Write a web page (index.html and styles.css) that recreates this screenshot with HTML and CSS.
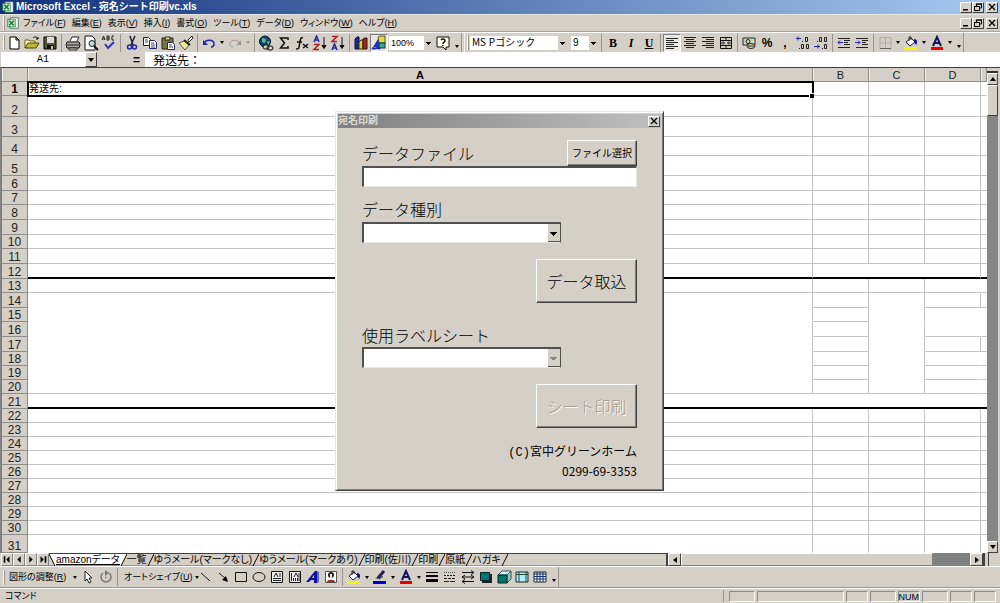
FILE: index.html
```html
<!DOCTYPE html>
<html lang="ja">
<head>
<meta charset="utf-8">
<title>Microsoft Excel - 宛名シート印刷vc.xls</title>
<link rel="stylesheet" href="styles.css">
</head>
<body>
<svg class="defs" aria-hidden="true">
  <symbol id="bucket" viewBox="0 0 16 16"><path d="M1 12h13v3H1z" fill="var(--ink)"/><path d="M3 7l5-4 4 4-5 4z" fill="#fff" stroke="#223" /><path d="M6 6V2h2v3" fill="none" stroke="#223"/><path d="M11 4c3 0 4 3 2 6l-2-3z" fill="#118"/></symbol>
  <symbol id="fontcolor" viewBox="0 0 16 16"><path d="M2 12h12v3H2z" fill="#e00"/><path d="M4 11L8 2l4 9M5.500 8h5" fill="none" stroke="#116" stroke-width="2"/></symbol>
  <symbol id="excel" viewBox="0 0 16 16"><path d="M4 1h11v14H4z" fill="#fff" stroke="#264"/><path d="M1 3h10v10H1z" fill="#d8ecd8" stroke="#173"/><path d="M3 5l6 6M9 5l-6 6" stroke="#173" stroke-width="2"/></symbol>
  <symbol id="min" viewBox="0 0 10 8"><path d="M2 6h5v1.500H2z"/></symbol>
  <symbol id="restore" viewBox="0 0 10 8"><path d="M3.500 3V1h5v4H7M1.500 3.500h5v4h-5z" fill="none" stroke="#000"/><path d="M3 .500h6v1H3zM1 3h6v1H1z"/></symbol>
  <symbol id="close" viewBox="0 0 10 8"><path d="M2 1l6 6M8 1L2 7" stroke="#000" stroke-width="1.300"/></symbol>
</svg>

<header class="title">
  <svg class="logo"><use href="#excel"/></svg>
  <h1>Microsoft Excel - 宛名シート印刷vc.xls</h1>
  <div class="winbtns">
    <button aria-label="最小化"><svg><use href="#min"/></svg></button><button aria-label="元に戻す"><svg><use href="#restore"/></svg></button><button class="x" aria-label="閉じる"><svg><use href="#close"/></svg></button>
  </div>
</header>

<nav class="menu">
  <i class="grip"></i>
  <svg class="logo"><use href="#excel"/></svg>
  <div class="items">
    <button>ファイル(<u>F</u>)</button><button>編集(<u>E</u>)</button><button>表示(<u>V</u>)</button><button>挿入(<u>I</u>)</button><button>書式(<u>O</u>)</button><button>ツール(<u>T</u>)</button><button>データ(<u>D</u>)</button><button>ウィンドウ(<u>W</u>)</button><button>ヘルプ(<u>H</u>)</button>
  </div>
  <div class="winbtns">
    <button aria-label="ブックを最小化"><svg><use href="#min"/></svg></button><button aria-label="ブックを元に戻す"><svg><use href="#restore"/></svg></button><button class="x" aria-label="ブックを閉じる"><svg><use href="#close"/></svg></button>
  </div>
</nav>

<div class="toolbar">
  <div class="bar">
    <i class="grip"></i>
    <button class="ic" aria-label="新規作成"><svg viewBox="0 0 16 16"><path d="M4 2h6l3 3v9H4zM10 2v3h3" fill="#fff" stroke="#000"/></svg></button>
    <button class="ic" aria-label="開く"><svg viewBox="0 0 16 16"><path d="M1 13V5h4l1 1h5v2" fill="#ffd" stroke="#660"/><path d="M1 13l3-5h11l-3 5z" fill="#bb3" stroke="#440"/><path d="M9 3c2-2 4-1 5 1m0-2v2h-2" fill="none" stroke="#000"/></svg></button>
    <button class="ic" aria-label="上書き保存"><svg viewBox="0 0 16 16"><path d="M2 2h12v12H2z" fill="#553" stroke="#000"/><path d="M5 2h7v6H5z" fill="#ddd"/><path d="M5 10h7v4H5z" fill="#111"/><path d="M9 11h2v3H9z" fill="#ccc"/></svg></button>
    <i class="sep"></i>
    <button class="ic" aria-label="印刷"><svg viewBox="0 0 16 16"><path d="M5 6l2-4h7l-2 4" fill="#fff" stroke="#222"/><path d="M2 7h12l1 3-1 3H2l-1-3z" fill="#aaa" stroke="#111"/><path d="M2 10h12M4 13h8v2H4z" stroke="#222" fill="#ddb"/></svg></button>
    <button class="ic" aria-label="印刷プレビュー"><svg viewBox="0 0 16 16"><path d="M2 1h7l3 3v11H2z" fill="#fff" stroke="#111"/><circle cx="9" cy="8.500" r="3" fill="#bdd" stroke="#222"/><path d="M11 11l4 4" stroke="#111" stroke-width="2"/></svg></button>
    <button class="ic" aria-label="スペルチェック"><svg viewBox="0 0 16 16"><path d="M1 5l1.500-4L4 5M2 4h2M6 1v4h2V1zM6 3h2M13 1h-2v4h2" fill="none" stroke="#222"/><path d="M4 9l3 4 6-6" fill="none" stroke="#33a" stroke-width="2"/></svg></button>
    <i class="sep"></i>
    <button class="ic" aria-label="切り取り"><svg viewBox="0 0 16 16"><path d="M6 1l3 9M11 1L7 10" stroke="#223" fill="none" stroke-width="1.500"/><circle cx="5.500" cy="12" r="2" fill="none" stroke="#22a" stroke-width="1.500"/><circle cx="10.500" cy="12" r="2" fill="none" stroke="#22a" stroke-width="1.500"/></svg></button>
    <button class="ic" aria-label="コピー"><svg viewBox="0 0 16 16"><path d="M1.500 2.500h5l2 2v6h-7z" fill="#fff" stroke="#222"/><path d="M7.500 5.500h5l2 2v6h-7z" fill="#fff" stroke="#226"/><path d="M3 5h3M3 7h3M9 8h3M9 10h4M9 12h4" stroke="#446"/></svg></button>
    <button class="ic" aria-label="貼り付け"><svg viewBox="0 0 16 16"><path d="M2 3h11v11H2z" fill="#774" stroke="#222"/><path d="M5 2h5v3H5z" fill="#dd8" stroke="#222"/><path d="M7.500 7.500h5l2 2v5h-7z" fill="#fff" stroke="#226"/><path d="M9 10h3M9 12h4" stroke="#446"/></svg></button>
    <button class="ic" aria-label="書式のコピー"><svg viewBox="0 0 16 16"><path d="M10 5l4-4 1 2-4 4z" fill="#fff" stroke="#222"/><path d="M1 8l5-2 5 4-4 5z" fill="#ee9" stroke="#553"/><path d="M6 5l6 5" stroke="#222" stroke-width="2"/></svg></button>
    <i class="sep"></i>
    <button class="ic" aria-label="元に戻す"><svg viewBox="0 0 16 16"><path d="M3 9c1-5 10-5 10 0 0 2-1 3-3 3" fill="none" stroke="#22a" stroke-width="1.500"/><path d="M2 5v5h5z" fill="#22a"/></svg></button>
    <button class="dd" aria-label="元に戻す履歴"></button>
    <button class="ic" aria-label="やり直し" disabled><svg viewBox="0 0 16 16"><path d="M13 9C12 4 3 4 3 9c0 2 1 3 3 3" fill="none" stroke="#999"/><path d="M14 5v5H9z" fill="#999"/></svg></button>
    <button class="dd off" aria-label="やり直し履歴" disabled></button>
    <i class="sep"></i>
    <button class="ic" aria-label="ハイパーリンク"><svg viewBox="0 0 16 16"><circle cx="7" cy="6.500" r="5.500" fill="#146" stroke="#013"/><path d="M4 3l4 1-1 4-3-1zM9 6l3 1-2 3z" fill="#6b9"/><rect x="5" y="10" width="6" height="4" rx="2" fill="#ccc" stroke="#111"/><rect x="9" y="11" width="6" height="4" rx="2" fill="none" stroke="#111"/></svg></button>
    <button class="ic" aria-label="オート SUM"><svg viewBox="0 0 16 16"><path d="M12 5V3H4.500l4 5-4 5H12v-2" fill="none" stroke="#111" stroke-width="1.500"/></svg></button>
    <button class="ic" aria-label="関数貼り付け"><svg viewBox="0 0 16 16"><path d="M9 3C6 1 6 8 5 12c0 2-1 2-3 2M3 7h5" fill="none" stroke="#111" stroke-width="1.500"/><path d="M9 9l5 4M14 9l-5 4" stroke="#111" stroke-width="1.500"/></svg></button>
    <button class="ic" aria-label="昇順"><svg viewBox="0 0 16 16"><path d="M2 7l2.500-6L7 7M3 5h3" fill="none" stroke="#22a" stroke-width="1.500"/><path d="M2 9.500h5l-5 5h5" fill="none" stroke="#a22" stroke-width="1.500"/><path d="M12 2v10M10 10.500l2 3 2-3z" stroke="#111"/></svg></button>
    <button class="ic" aria-label="降順"><svg viewBox="0 0 16 16"><path d="M2 1.500h5l-5 5h5" fill="none" stroke="#a22" stroke-width="1.500"/><path d="M2 15l2.500-6L7 15M3 13h3" fill="none" stroke="#22a" stroke-width="1.500"/><path d="M12 2v10M10 10.500l2 3 2-3z" stroke="#111"/></svg></button>
    <i class="sep"></i>
    <button class="ic" aria-label="グラフウィザード"><svg viewBox="0 0 16 16"><path d="M2 4l2-2h2v12H2z" fill="#22a" stroke="#113"/><path d="M6 7l2-2h2v9H6z" fill="#dc3" stroke="#331"/><path d="M10 4l2-1h2v11h-4z" fill="#a22" stroke="#311"/></svg></button>
    <button class="ic pressed" aria-label="図形描画"><svg viewBox="0 0 16 16"><path d="M7 2l2-1h5v7H8z" fill="#dd4" stroke="#553"/><path d="M2 12L7 4l2 8z" fill="#23b"/><rect x="8" y="8" width="6" height="5" fill="#3a9" stroke="#133"/><path d="M1 13c4 2 5-2 8 1" stroke="#22a" fill="none" stroke-width="2"/></svg></button>
    <select class="combo zoom" aria-label="ズーム"><option>100%</option></select>
    <button class="ic" aria-label="ヘルプ"><svg viewBox="0 0 16 16"><path d="M2 2h12v10h-3v3l-3-3H2z" fill="#ffe" stroke="#111"/><path d="M6 5c1-2 4-1 4 1 0 1-2 1-2 3M8 10v1" fill="none" stroke="#111" stroke-width="1.500"/></svg></button>
    <button class="dd more" aria-label="標準ツールバーのその他のボタン"></button>
  </div>
  <div class="bar fmt">
    <i class="grip"></i>
    <select class="combo font" aria-label="フォント"><option>ＭＳ Ｐゴシック</option></select>
    <select class="combo size" aria-label="フォントサイズ"><option>9</option></select>
    <i class="sep"></i>
    <button class="ic serif"><b>B</b></button><button class="ic serif"><em>I</em></button><button class="ic serif"><u>U</u></button>
    <i class="sep"></i>
    <button class="ic pressed" aria-label="左揃え"><svg viewBox="0 0 16 16"><path d="M2 3.500h12M2 5.500h8M2 7.500h12M2 9.500h8M2 11.500h12M2 13.500h8" stroke="#222"/></svg></button>
    <button class="ic" aria-label="中央揃え"><svg viewBox="0 0 16 16"><path d="M2 2.500h12M4 4.500h8M2 6.500h12M4 8.500h8M2 10.500h12M4 12.500h8" stroke="#222"/></svg></button>
    <button class="ic" aria-label="右揃え"><svg viewBox="0 0 16 16"><path d="M2 2.500h12M6 4.500h8M2 6.500h12M6 8.500h8M2 10.500h12M6 12.500h8" stroke="#222"/></svg></button>
    <button class="ic" aria-label="セルを結合して中央揃え"><svg viewBox="0 0 16 16"><path d="M2.500 2.500h11v11h-11zM2 5.500h12M2 10.500h12M8 2v3M8 11v3" fill="none" stroke="#111"/><path d="M3 8h3M10 8h3M5 6.500L6.500 8 5 9.500M11 6.500L9.500 8 11 9.500" fill="none" stroke="#111"/></svg></button>
    <i class="sep"></i>
    <button class="ic" aria-label="通貨スタイル"><svg viewBox="0 0 16 16"><path d="M2 3h12v7H2z" fill="#cdb" stroke="#222"/><circle cx="7" cy="6.500" r="2" fill="none" stroke="#222"/><ellipse cx="10" cy="11" rx="4" ry="2.500" fill="#ddb" stroke="#222"/><path d="M7 11h6" stroke="#222"/></svg></button>
    <button class="ic pct">%</button><button class="ic pct">,</button>
    <button class="ic" aria-label="小数点表示桁上げ"><svg viewBox="0 0 16 16"><path d="M6 3.500H1m2-2v4" stroke="#22a"/><path d="M10.500 2.500h2v4h-2zM6.500 9.500h2v4h-2zM11.500 9.500h2v4h-2z" fill="none" stroke="#222"/><path d="M7 6h1v1H7zM4 13h1v1H4z" fill="#222"/></svg></button>
    <button class="ic" aria-label="小数点表示桁下げ"><svg viewBox="0 0 16 16"><path d="M1 11.500h6m-2-2v4" stroke="#22a"/><path d="M6.500 2.500h2v4h-2zM11.500 2.500h2v4h-2zM11.500 9.500h2v4h-2z" fill="none" stroke="#222"/><path d="M4 6h1v1H4zM9 13h1v1H9z" fill="#222"/></svg></button>
    <i class="sep"></i>
    <button class="ic" aria-label="インデント解除"><svg viewBox="0 0 16 16"><path d="M2 3.500h12M8 5.500h6M8 7.500h4M8 9.500h6M2 12.500h12" stroke="#222"/><path d="M7 7.500H2m2-2l-2 2 2 2" fill="none" stroke="#22a"/></svg></button>
    <button class="ic" aria-label="インデント"><svg viewBox="0 0 16 16"><path d="M2 3.500h12M8 5.500h6M8 7.500h4M8 9.500h6M2 12.500h12" stroke="#222"/><path d="M1 7.500h5m-2-2l2 2-2 2" fill="none" stroke="#22a"/></svg></button>
    <i class="sep"></i>
    <button class="ic" aria-label="罫線"><svg viewBox="0 0 16 16"><path d="M3 2.500h11v11H3zM8.500 2v11M3 8h11" fill="none" stroke="#aaa"/><path d="M3 13.500h11" stroke="#666"/></svg></button>
    <button class="dd" aria-label="罫線の種類"></button>
    <button class="ic" aria-label="塗りつぶしの色"><svg><use href="#bucket"/></svg></button>
    <button class="dd" aria-label="塗りつぶしの色を選択"></button>
    <button class="ic" aria-label="フォントの色"><svg><use href="#fontcolor"/></svg></button>
    <button class="dd" aria-label="フォントの色を選択"></button>
    <button class="dd more" aria-label="書式ツールバーのその他のボタン"></button>
  </div>
</div>

<div class="formula">
  <input class="name" aria-label="名前ボックス" value="A1">
  <button class="down" aria-label="名前の一覧"></button>
  <button class="eq">=</button>
  <input class="fx" aria-label="数式バー" value="発送先：">
</div>

<main class="work">
  <table class="sheet">
    <colgroup><col class="ch"><col><col class="cc"><col class="cc"><col class="cc"><col class="ce"></colgroup>
    <thead><tr><th></th><th scope="col" class="cur">A</th><th scope="col">B</th><th scope="col">C</th><th scope="col">D</th><th></th></tr></thead>
    <tbody>
    <tr><th scope="row" class="cur">1</th><td class="sel">発送先:<i></i></td><td></td><td></td><td></td><td></td></tr>
    <tr class="t21"><th scope="row">2</th><td></td><td></td><td></td><td></td><td></td></tr>
    <tr class="t20"><th scope="row">3</th><td></td><td></td><td></td><td></td><td></td></tr>
    <tr class="t19"><th scope="row">4</th><td></td><td></td><td></td><td></td><td></td></tr>
    <tr class="t20"><th scope="row">5</th><td></td><td></td><td></td><td></td><td></td></tr>
    <tr class="t15"><th scope="row">6</th><td></td><td></td><td></td><td></td><td></td></tr>
    <tr><th scope="row">7</th><td></td><td></td><td></td><td></td><td></td></tr>
    <tr class="t15"><th scope="row">8</th><td></td><td></td><td></td><td></td><td></td></tr>
    <tr class="t15"><th scope="row">9</th><td></td><td></td><td></td><td></td><td></td></tr>
    <tr><th scope="row">10</th><td></td><td></td><td></td><td></td><td></td></tr>
    <tr class="t15"><th scope="row">11</th><td></td><td></td><td></td><td></td><td></td></tr>
    <tr class="t15 thick"><th scope="row">12</th><td></td><td class="nr"></td><td class="nr"></td><td></td><td></td></tr>
    <tr><th scope="row">13</th><td></td><td></td><td></td><td class="nr"></td><td></td></tr>
    <tr class="t15"><th scope="row">14</th><td class="nb"></td><td></td><td class="nb"></td><td></td><td></td></tr>
    <tr><th scope="row">15</th><td class="nb"></td><td></td><td class="nb"></td><td class="nr nb"></td><td class="nb"></td></tr>
    <tr class="t15"><th scope="row">16</th><td class="nb"></td><td></td><td class="nb"></td><td class="nr"></td><td></td></tr>
    <tr class="t15"><th scope="row">17</th><td class="nb"></td><td></td><td class="nb"></td><td></td><td></td></tr>
    <tr><th scope="row">18</th><td class="nb"></td><td></td><td class="nb"></td><td class="nr"></td><td></td></tr>
    <tr><th scope="row">19</th><td class="nb"></td><td></td><td class="nb"></td><td class="nr"></td><td></td></tr>
    <tr><th scope="row">20</th><td></td><td></td><td></td><td class="nr"></td><td></td></tr>
    <tr class="t15 thick"><th scope="row">21</th><td class="nr"></td><td class="nr"></td><td class="nr"></td><td class="nr"></td><td></td></tr>
    <tr><th scope="row">22</th><td></td><td></td><td></td><td></td><td></td></tr>
    <tr><th scope="row">23</th><td></td><td></td><td></td><td></td><td></td></tr>
    <tr><th scope="row">24</th><td></td><td></td><td></td><td></td><td></td></tr>
    <tr><th scope="row">25</th><td></td><td></td><td></td><td></td><td></td></tr>
    <tr><th scope="row">26</th><td></td><td></td><td></td><td></td><td></td></tr>
    <tr><th scope="row">27</th><td></td><td></td><td></td><td></td><td></td></tr>
    <tr><th scope="row">28</th><td></td><td></td><td></td><td></td><td></td></tr>
    <tr><th scope="row">29</th><td></td><td></td><td></td><td></td><td></td></tr>
    <tr><th scope="row">30</th><td></td><td></td><td></td><td></td><td></td></tr>
    <tr class="t18"><th scope="row">31</th><td class="nb"></td><td class="nb"></td><td class="nb"></td><td class="nb"></td><td class="nb"></td></tr>
    </tbody>
  </table>
  <div class="vscroll">
    <i class="split"></i>
    <button class="arr up" aria-label="上へスクロール"></button>
    <i class="thumb"></i>
    <i class="track"></i>
    <button class="arr down2" aria-label="下へスクロール"></button>
  </div>

  <section class="dialog" role="dialog" aria-labelledby="dlg">
    <header><h2 id="dlg">宛名印刷</h2><div class="winbtns"><button class="x" aria-label="フォームを閉じる"><svg><use href="#close"/></svg></button></div></header>
    <form>
      <div class="line">
        <label for="file">データファイル</label>
        <button type="button" class="push small">ファイル選択</button>
      </div>
      <input id="file" class="field" type="text">
      <label class="l2" for="kind">データ種別</label>
      <select id="kind" class="field pick"><option></option></select>
      <button type="button" class="push big">データ取込</button>
      <label class="l3" for="label">使用ラベルシート</label>
      <select id="label" class="field pick off" disabled><option></option></select>
      <button type="button" class="push big" disabled>シート印刷</button>
      <p class="copy">(C)宮中グリーンホーム</p>
      <p class="tel">0299-69-3353</p>
    </form>
  </section>
</main>

<div class="tabs">
  <div class="nav">
    <button aria-label="先頭のシート"><svg viewBox="0 0 12 12"><path d="M2 2h2v8H2zM9 2v8L5 6z"/></svg></button><button aria-label="前のシート"><svg viewBox="0 0 12 12"><path d="M8 2v8L4 6z"/></svg></button><button aria-label="次のシート"><svg viewBox="0 0 12 12"><path d="M4 2v8l4-4z"/></svg></button><button aria-label="末尾のシート"><svg viewBox="0 0 12 12"><path d="M3 2v8l4-4zM8 2h2v8H8z"/></svg></button>
  </div>
  <div class="names">
    <svg viewBox="0 0 7 12"><path d="M0 0h7v12H6z" fill="#fff"/><path d="M0 0l6 12" stroke="#000" fill="none"/></svg><button class="on">amazonデータ</button><svg viewBox="0 0 7 12"><path d="M0 0h7L1 12H0z" fill="#fff"/><path d="M7 0L1 12" stroke="#000" fill="none"/></svg>
    <button>一覧</button><svg viewBox="0 0 7 12"><path d="M7 0L1 12" stroke="#000"/></svg>
    <button>ゆうメール(マークなし)</button><svg viewBox="0 0 7 12"><path d="M7 0L1 12" stroke="#000"/></svg>
    <button>ゆうメール(マークあり)</button><svg viewBox="0 0 7 12"><path d="M7 0L1 12" stroke="#000"/></svg>
    <button>印刷(佐川)</button><svg viewBox="0 0 7 12"><path d="M7 0L1 12" stroke="#000"/></svg>
    <button>印刷</button><svg viewBox="0 0 7 12"><path d="M7 0L1 12" stroke="#000"/></svg>
    <button>原紙</button><svg viewBox="0 0 7 12"><path d="M7 0L1 12" stroke="#000"/></svg>
    <button>ハガキ</button><svg viewBox="0 0 7 12"><path d="M7 0L1 12" stroke="#000"/></svg>
  </div>
  <div class="hscroll">
    <button class="arr left" aria-label="左へスクロール"></button>
    <i class="hthumb"></i><i class="htrack"></i>
    <button class="arr right" aria-label="右へスクロール"></button>
    <i class="hend"></i>
  </div>
</div>

<div class="draw">
  <div class="bar">
    <i class="grip"></i>
    <button class="txt adj"><span>図形の調整(<u>R</u>)</span><i class="dd"></i></button>
    <button class="ic" aria-label="オブジェクトの選択"><svg viewBox="0 0 16 16"><path d="M5 2v10l2-2 2 4 2-1-2-4h3z" fill="#fff" stroke="#222"/></svg></button>
    <button class="ic" aria-label="自由に回転"><svg viewBox="0 0 16 16"><path d="M11 4a5 5 0 1 1-6 0" fill="none" stroke="#777" stroke-width="1.500"/><path d="M7 1l4 3-4 3z" fill="#777"/><circle cx="8" cy="8.500" r="1" fill="#888"/></svg></button>
    <i class="sep"></i>
    <button class="txt shape"><span>オートシェイプ(<u>U</u>)</span><i class="dd"></i></button>
    <button class="ic" aria-label="直線"><svg viewBox="0 0 16 16"><path d="M4 4l9 8" stroke="#111"/></svg></button>
    <button class="ic" aria-label="矢印"><svg viewBox="0 0 16 16"><path d="M4 4l7 6" stroke="#111"/><path d="M13 13l-6-2 4-4z"/></svg></button>
    <button class="ic" aria-label="四角形"><svg viewBox="0 0 16 16"><path d="M2.500 3.500h11v9h-11z" fill="none" stroke="#111"/></svg></button>
    <button class="ic" aria-label="楕円"><svg viewBox="0 0 16 16"><ellipse cx="8" cy="8" rx="6" ry="4.500" fill="none" stroke="#111"/></svg></button>
    <button class="ic" aria-label="テキストボックス"><svg viewBox="0 0 16 16"><path d="M2.500 2.500h11v11h-11z" fill="#eee" stroke="#111"/><path d="M5 8l2-4 2 4M10 5h2M10 7h2M4 9.500h8M4 11.500h8" stroke="#222" fill="none"/></svg></button>
    <button class="ic" aria-label="縦書きテキストボックス"><svg viewBox="0 0 16 16"><path d="M2.500 2.500h11v11h-11z" fill="#eee" stroke="#111"/><path d="M7 8l2-4 2 4M4.500 4v8M6.500 9v3M8.500 9v3M10.500 9v3M12 4v8" stroke="#222" fill="none"/></svg></button>
    <button class="ic" aria-label="ワードアートの挿入"><svg viewBox="0 0 16 16"><path d="M1 13L10 2h2v12H9v-3H6l-2 2z" fill="#119"/><path d="M7 9l2-3v3z" fill="#d4d0c8"/><path d="M12 2l2 1v10l-2 1z" fill="#56c"/></svg></button>
    <button class="ic" aria-label="クリップアートの挿入"><svg viewBox="0 0 16 16"><path d="M2.500 2.500h11v11h-11z" fill="#fff" stroke="#555"/><circle cx="8" cy="6" r="3" fill="#222"/><path d="M7 5h2v4H7z" fill="#fdc"/><path d="M4 13c0-3 8-3 8 0z" fill="#a22"/></svg></button>
    <i class="sep"></i>
    <button class="ic" aria-label="塗りつぶしの色"><svg><use href="#bucket"/></svg></button>
    <button class="dd" aria-label="塗りつぶしの一覧"></button>
    <button class="ic" aria-label="線の色"><svg viewBox="0 0 16 16"><path d="M1 12h13v3H1z" fill="#00d"/><path d="M3 9l3 1 1-2z" fill="#235"/><path d="M6 9l6-7" stroke="#225" stroke-width="3"/><path d="M7 10c2-1 3-3 4-2" stroke="#111" fill="none"/></svg></button>
    <button class="dd" aria-label="線の色の一覧"></button>
    <button class="ic" aria-label="フォントの色"><svg><use href="#fontcolor"/></svg></button>
    <button class="dd" aria-label="フォントの色の一覧"></button>
    <button class="ic" aria-label="線のスタイル"><svg viewBox="0 0 16 16"><path d="M2 3.500h12" stroke="#000"/><path d="M2 7h12" stroke="#000" stroke-width="2"/><path d="M2 11.500h12" stroke="#000" stroke-width="3"/></svg></button>
    <button class="ic" aria-label="点線/実線のスタイル"><svg viewBox="0 0 16 16"><path d="M2 3.500h12" stroke="#555" stroke-dasharray="1 1"/><path d="M2 6.500h12" stroke="#222" stroke-dasharray="2 1"/><path d="M2 9.500h12" stroke="#222" stroke-dasharray="3 1"/><path d="M2 12.500h12" stroke="#222" stroke-dasharray="5 1"/></svg></button>
    <button class="ic" aria-label="矢印のスタイル"><svg viewBox="0 0 16 16"><path d="M2 3.500h11M2 8h12M3 12.500h11M11 1.500l3 2-3 2M5 6L2 8l3 2M11 6l3 2-3 2M5 10.500l-3 2 3 2" stroke="#111" fill="none"/></svg></button>
    <button class="ic" aria-label="影"><svg viewBox="0 0 16 16"><path d="M4 5h10v9H4z" fill="#222"/><path d="M2.500 3.500h9v8h-9z" fill="#077" stroke="#022"/></svg></button>
    <button class="ic" aria-label="3-D"><svg viewBox="0 0 16 16"><path d="M2 6l4-4h9l-4 4z" fill="#dff" stroke="#355"/><path d="M11 6l4-4v8l-4 4z" fill="#9cc" stroke="#355"/><path d="M2 6h9v8H2z" fill="#076" stroke="#022"/></svg></button>
    <button class="ic" aria-label="枠線"><svg viewBox="0 0 16 16"><path d="M2 3h12v10H2z" fill="#aef" stroke="#222"/><path d="M2 5.500h12M5 3v10M12 3v10" stroke="#243"/></svg></button>
    <button class="ic" aria-label="セルの書式"><svg viewBox="0 0 16 16"><path d="M2 3h12v10H2z" fill="#eff" stroke="#222"/><path d="M2 5h12M2 7.500h12M2 10h12M5 3v10M8 3v10M11 3v10" stroke="#136"/></svg></button>
    <button class="dd more" aria-label="図形描画ツールバーのその他のボタン"></button>
  </div>
</div>

<footer class="status">
  <span class="msg">コマンド</span>
  <i class="p p26"></i><i class="p p87"></i><i class="p p22"></i><i class="p p26"></i><span class="p num">NUM</span><i class="p p26"></i><i class="p p22"></i><i class="p p22"></i>
</footer>
</body>
</html>
```
FILE: styles.css
```css
:root {
  --face: #d4d0c8;
  --line: #c4c4c4;
  --dark: #808080;
  --ink: #f4f400;
}
* { box-sizing: border-box; }
body {
  margin: 0;
  min-height: 100vh;
  display: flex;
  flex-direction: column;
  background: var(--face);
  color: #000;
  font: 9px/12px "Liberation Sans", "Noto Sans CJK JP", sans-serif;
}
button, input, select {
  margin: 0;
  padding: 0;
  border: 0;
  border-radius: 0;
  background: none;
  color: inherit;
  font: inherit;
  appearance: none;
}
i { font-style: normal; }
.defs { display: none; }
svg { display: block; flex: none; }

/* title and menu */
.title {
  height: 15px;
  display: flex;
  align-items: center;
  padding: 0 2px;
  background: linear-gradient(90deg, #12317c, #a6caf0);
  border-bottom: 1px solid #e8e6e0;
}
.title h1 {
  flex: 1;
  margin: 0 0 0 2px;
  color: #fff;
  font-size: 10px;
  line-height: 14px;
  white-space: pre;
}
.logo { width: 12px; height: 12px; }
.winbtns { display: flex; }
.winbtns button {
  width: 12px;
  height: 11px;
  display: grid;
  place-items: center;
  background: var(--face);
  border: 1px solid;
  border-color: #fff #404040 #404040 #fff;
}
.winbtns svg { width: 10px; height: 8px; }
.winbtns .x { margin-left: 2px; }
.menu {
  height: 17px;
  display: flex;
  align-items: center;
  padding: 0 2px 0 3px;
  border-bottom: 1px solid #aaa69e;
}
.grip {
  flex: none;
  width: 2px;
  height: 15px;
  border-left: 1px solid #fff;
  border-right: 1px solid #9a968e;
}
.menu .logo { margin-left: 2px; }
.items { flex: 1; display: flex; gap: 6px; padding-left: 4px; white-space: nowrap; font-feature-settings: "palt"; }

/* tool bars */
.toolbar { height: 20px; display: flex; border-top: 1px solid #fff; }
.bar { display: flex; align-items: center; padding-left: 3px; border-right: 1px solid #9a968e; }
.fmt { padding-left: 2px; margin-left: 2px; border-left: 1px solid #f4f2ec; }
.ic { flex: none; width: 18px; height: 18px; display: grid; place-items: center; }
.ic svg { width: 16px; height: 16px; }
.sep { flex: none; width: 5px; height: 18px; border-right: 2px solid transparent; box-shadow: inset -1px 0 #9a968e; border-left: 1px solid transparent; }
.pressed { background: #ebe9e4; border: 1px solid; border-color: #808080 #fff #fff #808080; }
.dd { flex: none; width: 8px; height: 18px; display: grid; place-items: center; }
.dd::after { content: ""; border: 2px solid transparent; border-top: 3px solid #000; border-bottom: 0; }
.dd.off::after { border-top-color: #999; }
.dd.more { align-items: end; padding-bottom: 4px; width: 9px; }
.combo {
  height: 14px;
  padding-left: 2px;
  background: linear-gradient(#000, #000) right 3px top 6px / 5px 1px no-repeat,
    linear-gradient(#000, #000) right 4px top 7px / 3px 1px no-repeat,
    linear-gradient(#000, #000) right 5px top 8px / 1px 1px no-repeat,
    linear-gradient(var(--face), var(--face)) right / 10px 14px no-repeat, #fff;
  font-size: 9px;
  line-height: 14px;
}
.zoom { width: 45px; margin-left: 1px; }
.font { width: 98px; margin: 0 3px 0 1px; font-size: 10px; font-feature-settings: "pwid"; }
.size { width: 28px; font-size: 10px; }
.serif { font: bold 12px/14px "Liberation Serif", serif; }
.pct { font-weight: bold; font-size: 12px; }

/* formula bar */
.formula { height: 15px; display: flex; background: var(--face); padding-left: 1px; }
.name { width: 84px; background: #fff; text-align: center; font: 10px/14px "Liberation Mono", monospace; }
.down { width: 12px; display: grid; place-items: center; border: 1px solid; border-color: #fff #404040 #404040 #fff; }
.down::after { content: ""; border: 3px solid transparent; border-top: 4px solid #000; border-bottom: 0; }
.eq { width: 47px; text-align: right; padding-right: 4px; font-weight: bold; font-size: 12px; }
.fx { flex: 1; min-width: 0; padding-left: 8px; margin-left: 1px; background: #fff; font: 12px/14px "Noto Sans CJK JP", sans-serif; }

/* sheet */
.work { position: relative; flex: 1; display: flex; border-top: 1px solid #404040; border-left: 2px solid #808080; background: #fff; }
.sheet { flex: 1; min-width: 0; table-layout: fixed; border-collapse: separate; border-spacing: 0; }
.ch { width: 26px; }
.cc { width: 56px; }
.ce { width: 6px; }
.sheet tr { height: 14px; }
.sheet .t15 { height: 15px; }
.sheet .t18 { height: 18px; }
.sheet .t19 { height: 19px; }
.sheet .t20 { height: 20px; }
.sheet .t21 { height: 21px; }
.sheet td { padding: 0; border-right: 1px solid var(--line); border-bottom: 1px solid var(--line); font-size: 10px; line-height: 12px; }
.sheet td:last-child { border-right: 0; }
.sheet th {
  padding: 0;
  background: var(--face);
  border-right: 1px solid #8c8c8c;
  border-bottom: 1px solid #8c8c8c;
  color: #222;
  font-weight: normal;
  font-size: 12px;
  line-height: 12px;
  vertical-align: bottom;
}
.sheet thead th { border-right-color: #8c8c8c; box-shadow: inset 1px 0 #f0eeea; font-size: 11px; }
.sheet .cur { font-weight: bold; color: #000; }
.sheet .nr { border-right-color: transparent; }
.sheet .nb { border-bottom-color: transparent; }
.sheet .thick td { border-bottom: 2px solid #000; }
.sheet .thick .nr { border-right: 0; }
.sheet .sel { position: relative; padding-left: 1px; outline: 2px solid #000; outline-offset: -1px; }
.sel i { position: absolute; right: -2px; bottom: -3px; width: 5px; height: 5px; background: #000; border: 1px solid #fff; border-width: 1px 0 0 1px; }

/* scroll bars */
.vscroll { width: 13px; padding-right: 2px; display: flex; flex-direction: column; background: var(--face); }
.split { height: 5px; border-bottom: 2px solid #303030; }
.arr { flex: none; display: grid; place-items: center; background: var(--face); border: 1px solid; border-color: #fff #404040 #404040 #fff; }
.arr::after { content: ""; border: 3px solid transparent; }
.vscroll .arr { height: 12px; }
.up::after { border-top: 0; border-bottom: 4px solid #000; }
.down2::after { border-bottom: 0; border-top: 4px solid #000; }
.thumb { height: 31px; border: 1px solid; border-color: #fff #404040 #404040 #fff; }
.track { flex: 1; background: #868686; }

/* form window */
.dialog {
  position: absolute;
  left: 333px;
  top: 43px;
  width: 329px;
  padding: 2px;
  background: var(--face);
  border: 1px solid;
  border-color: #e8e6e0 #404040 #404040 #e8e6e0;
  box-shadow: inset 1px 1px #fff, inset -1px -1px #808080;
}
.dialog header { height: 14px; display: flex; align-items: center; padding-right: 1px; background: linear-gradient(90deg, #808080, #c0c0c0); }
.dialog h2 { flex: 1; margin: 0; color: #dedbd4; font-size: 10px; line-height: 14px; }
.dialog form { display: flex; flex-direction: column; padding: 12px 24px 8px; font: 16px/20px "Noto Sans CJK JP", sans-serif; font-weight: 300; }
.line { display: flex; justify-content: space-between; align-items: center; }
.push {
  background: var(--face);
  border: 1px solid;
  border-color: #fff #404040 #404040 #fff;
  box-shadow: inset -1px -1px #808080;
}
.small { width: 70px; height: 26px; font-size: 10px; line-height: 14px; font-weight: 400; }
.big { align-self: flex-end; width: 101px; height: 44px; }
.push:disabled { color: #a09c94; text-shadow: 1px 1px #fff; }
.field { height: 21px; background: #fff; border: 2px solid; border-color: #505050 #e8e6e0 #e8e6e0 #505050; border-width: 2px 1px 1px 2px; }
.l2 { margin: 12px 0 3px; }
.l3 { margin: 22px 0 2px; }
.pick {
  width: 199px;
  margin-bottom: 16px;
  border-right-color: #505050;
  background: linear-gradient(#000, #000) right 3px top 8px / 7px 1px no-repeat,
    linear-gradient(#000, #000) right 4px top 9px / 5px 1px no-repeat,
    linear-gradient(#000, #000) right 5px top 10px / 3px 1px no-repeat,
    linear-gradient(#000, #000) right 6px top 11px / 1px 1px no-repeat,
    linear-gradient(#505050, #505050) right bottom / 12px 1px no-repeat,
    linear-gradient(var(--face), var(--face)) right / 12px 20px no-repeat, #fff;
}
.pick.off {
  opacity: 1;
  background: linear-gradient(#888, #888) right 3px top 8px / 7px 1px no-repeat,
    linear-gradient(#888, #888) right 4px top 9px / 5px 1px no-repeat,
    linear-gradient(#888, #888) right 5px top 10px / 3px 1px no-repeat,
    linear-gradient(#505050, #505050) right bottom / 12px 1px no-repeat,
    linear-gradient(var(--face), var(--face)) right / 12px 20px no-repeat, #fff;
}
.copy, .tel { margin: 0; text-align: right; font-size: 12px; line-height: 18px; font-weight: 400; }
.copy { margin-top: 16px; font-family: "Liberation Mono", "Noto Sans CJK JP", monospace; }

/* sheet tabs */
.tabs { height: 13px; display: flex; }
.nav { display: flex; padding-left: 1px; }
.nav button { width: 12px; border: 1px solid; border-color: #fff #808080 #808080 #fff; }
.nav svg { width: 10px; height: 11px; }
.names { flex: 1; display: flex; align-items: stretch; border-top: 1px solid #404040; border-bottom: 1px solid #9a968e; white-space: nowrap; }
.names svg { width: 7px; height: 12px; }
.names button { line-height: 11px; font-size: 10px; font-feature-settings: "palt"; }
.names .on { background: #fff; border-bottom: 1px solid #000; }
.hscroll { width: 334px; display: flex; border-left: 2px solid #404040; }
.hscroll .arr { width: 13px; }
.left::after { border-left: 0; border-right: 4px solid #000; }
.right::after { border-right: 0; border-left: 4px solid #000; }
.hthumb { flex: 1; border: 1px solid; border-color: #fff #808080 #808080 #fff; }
.htrack { width: 37px; background: #808080; }
.hend { width: 17px; border-left: 2px solid #404040; box-shadow: inset 3px 0 var(--face), inset 4px 0 #404040; }

/* drawing bar */
.draw { height: 22px; display: flex; border-top: 1px solid #fff; border-bottom: 1px solid #9a968e; }
.txt { display: flex; align-items: center; justify-content: space-between; white-space: nowrap; padding-left: 4px; font-feature-settings: "palt"; }
.adj { width: 74px; }
.shape { width: 76px; }

/* status bar */
.status { height: 15px; display: flex; align-items: center; gap: 2px; padding: 0 4px 0 5px; border-top: 1px solid #fff; }
.msg { flex: 1; font-size: 9px; border-right: 1px solid #9a968e; margin-right: 3px; font-feature-settings: "palt"; }
.p { height: 11px; border: 1px solid; border-color: #8c8c8c #fff #fff #8c8c8c; }
.p26 { width: 26px; }
.p87 { width: 87px; }
.p22 { width: 22px; }
.num { line-height: 10px; }
```
